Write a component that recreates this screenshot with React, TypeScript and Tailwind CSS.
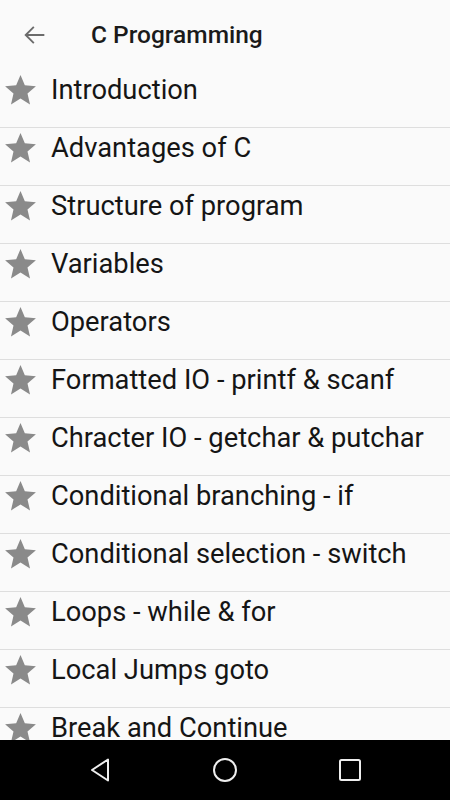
import React from 'react';

const topics = [
  'Introduction',
  'Advantages of C',
  'Structure of program',
  'Variables',
  'Operators',
  'Formatted IO - printf & scanf',
  'Chracter IO - getchar & putchar',
  'Conditional branching - if',
  'Conditional selection - switch',
  'Loops - while & for',
  'Local Jumps goto',
  'Break and Continue',
];

const Star = () => (
  <svg viewBox="0 0 24 24" className="w-[37px] h-[37px] shrink-0" fill="#8a8a8a">
    <path d="M12 17.27L18.18 21l-1.64-7.03L22 9.24l-7.19-.61L12 2 9.19 8.63 2 9.24l5.46 4.73L5.82 21z" />
  </svg>
);

const App: React.FC = () => {
  return (
    <div className="w-[450px] h-[800px] flex flex-col bg-[#fafafa] overflow-hidden" style={{ fontFamily: 'Roboto, sans-serif' }}>
      {/* Toolbar */}
      <div className="h-[70px] shrink-0 flex items-center">
        <svg viewBox="0 0 24 24" className="w-[28px] h-[28px] ml-[21px]" fill="none" stroke="#6b6b6b" strokeWidth="1.6">
          <path d="M20 12H4M11 5l-7 7 7 7" />
        </svg>
        <span className="ml-[42px] text-[24.5px] font-medium text-[#1a1a1a] leading-none">C Programming</span>
      </div>

      {/* List */}
      <div className="flex-1 overflow-hidden">
        {topics.map((t) => (
          <div key={t} className="h-[58px] border-b border-[#dedede] flex items-start">
            <div className="ml-[2px] mt-[2px]">
              <Star />
            </div>
            <span className="ml-[12px] text-[27.3px] leading-[40px] text-[#151515] whitespace-nowrap">{t}</span>
          </div>
        ))}
      </div>

      {/* Nav bar */}
      <div className="h-[60px] shrink-0 bg-black flex items-center justify-center gap-[101px]">
        <svg viewBox="0 0 20 24" className="w-[20px] h-[24px] mx-[2px]" fill="none" stroke="#eee" strokeWidth="2" strokeLinejoin="round">
          <path d="M18 1.5v21L2 12z" />
        </svg>
        <svg viewBox="0 0 24 24" className="w-[24px] h-[24px]" fill="none" stroke="#eee" strokeWidth="2">
          <circle cx="12" cy="12" r="11" />
        </svg>
        <svg viewBox="0 0 24 24" className="w-[24px] h-[24px]" fill="none" stroke="#eee" strokeWidth="2">
          <rect x="2" y="2" width="20" height="20" rx="1.5" />
        </svg>
      </div>
    </div>
  );
};

export default App;
